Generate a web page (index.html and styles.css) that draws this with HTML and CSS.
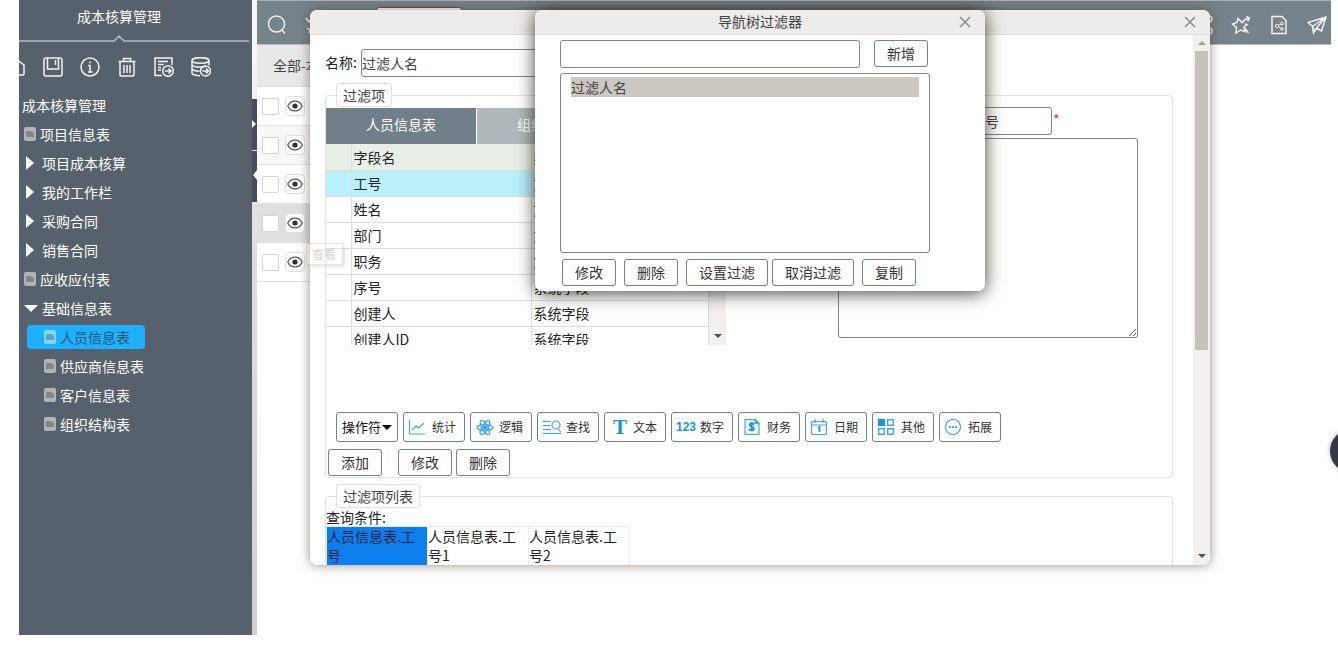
FILE: index.html
```html
<!DOCTYPE html>
<html lang="zh-CN">
<head>
<meta charset="utf-8">
<title>成本核算管理</title>
<link rel="stylesheet" href="styles.css">
</head>
<body>
<svg class="defs" aria-hidden="true">
  <symbol id="doc" viewBox="0 0 12 14"><rect width="12" height="14" rx="2" fill="currentColor"/><path d="M2 4h5l3 2v4H2z" fill="#000" opacity=".25"/></symbol>
  <symbol id="eye" viewBox="0 0 16 12"><path d="M.7 6C4-.6 12-.6 15.300 6 12 12.600 4 12.600.7 6z" fill="#fff" stroke="#555" stroke-width="1.200"/><circle cx="8" cy="6" r="2.600" fill="#333"/></symbol>
  <symbol id="close" viewBox="0 0 12 12"><path d="M1 1l10 10M11 1L1 11" stroke="#8b8b87" stroke-width="1.500" fill="none"/></symbol>
</svg>
<div class="app">
  <nav class="sidebar">
    <h1 class="side-title">成本核算管理</h1>
    <svg class="side-line" viewBox="0 0 230 8"><path d="M0 7h95l5-5 5 5h125" fill="none" stroke="#b5bbbf" stroke-width="1.500"/></svg>
    <div class="side-tools">
      <button class="icon-btn" aria-label="主页"><svg viewBox="0 0 20 20"><path d="M1 9l9-7 8 6v9q0 1-1 1h-4"/></svg></button>
      <button class="icon-btn" aria-label="保存"><svg viewBox="0 0 20 20"><rect x="1" y="1" width="18" height="18" rx="2"/><path d="M4.500 1v11h11V1M12.500 3v5"/></svg></button>
      <button class="icon-btn" aria-label="信息"><svg viewBox="0 0 20 20"><circle cx="10" cy="10" r="9"/><path d="M8 8.500h2V15M8 15h4.500M10 4.500v1.800"/></svg></button>
      <button class="icon-btn" aria-label="清空"><svg viewBox="0 0 20 20"><path d="M1.500 4.500h17M6.500 4V1.500h7V4M3 4.500V18q0 1 1 1h12q1 0 1-1V4.500M7 8v8M10 8v8M13 8v8"/></svg></button>
      <button class="icon-btn" aria-label="导出报表"><svg viewBox="0 0 20 20"><path d="M8 18.500H1V1h17v7M4 4.500h10M4 7.500h6M4 10.500h3M4 13h3"/><circle cx="14" cy="14" r="5.300"/><path d="M11 14h6M14.500 11.500L17 14l-2.500 2.500"/></svg></button>
      <button class="icon-btn" aria-label="导出数据"><svg viewBox="0 0 20 20"><ellipse cx="9.500" cy="3.500" rx="8.500" ry="2.800"/><path d="M1 3.500V16c0 1.500 4 2.700 8 2.700M18 3.500v5M1 7.500c0 2.500 10 3.500 14 1.500M1 11.700c1 2 4 2.500 7.500 2.500"/><circle cx="14.500" cy="14" r="5"/><path d="M11.500 14h6M15 11.500l2.500 2.500-2.500 2.500"/></svg></button>
    </div>
    <ul class="tree">
      <li class="root">成本核算管理</li>
      <li class="leaf"><svg class="doc"><use href="#doc"/></svg>项目信息表</li>
      <li class="folder"><i class="tri"></i>项目成本核算</li>
      <li class="folder"><i class="tri"></i>我的工作栏</li>
      <li class="folder"><i class="tri"></i>采购合同</li>
      <li class="folder"><i class="tri"></i>销售合同</li>
      <li class="leaf"><svg class="doc"><use href="#doc"/></svg>应收应付表</li>
      <li class="folder"><i class="tri open"></i>基础信息表</li>
      <li class="child"><span class="node selected"><svg class="doc"><use href="#doc"/></svg>人员信息表</span></li>
      <li class="child"><span class="node"><svg class="doc"><use href="#doc"/></svg>供应商信息表</span></li>
      <li class="child"><span class="node"><svg class="doc"><use href="#doc"/></svg>客户信息表</span></li>
      <li class="child"><span class="node"><svg class="doc"><use href="#doc"/></svg>组织结构表</span></li>
    </ul>
  </nav>
  <div class="splitter">
    <button class="handle" aria-label="展开"><svg viewBox="0 0 5 50"><path d="M0 20l4 4-4 4z" fill="#fff"/></svg></button>
    <button class="handle" aria-label="收起"><svg viewBox="0 0 5 50"><path d="M5 18l-4 5 4 5z" fill="#fff"/></svg></button>
  </div>
  <main class="main">
    <header class="toolbar">
      <div class="tools">
        <button class="icon-btn" aria-label="搜索"><svg viewBox="0 0 20 20"><circle cx="9.500" cy="9" r="8"/><path d="M15 15l3 3.500"/></svg></button>
        <button class="icon-btn" aria-label="刷新"><svg viewBox="0 0 20 20"><path d="M1 3l3 4 4-3M2 13l3 2-1 3M4 7c4-6 11-5 13 0M5 15c4 5 10 3 12-2"/></svg></button>
      </div>
      <div class="peek"></div>
      <div class="tools right">
        <button class="icon-btn" aria-label="分享"><svg viewBox="0 0 20 20"><circle cx="4" cy="10" r="3"/><circle cx="16" cy="4" r="3"/><circle cx="16" cy="16" r="3"/><path d="M7 9l6-4M7 11l6 4"/></svg></button>
        <button class="icon-btn" aria-label="固定"><svg viewBox="0 0 20 20"><path d="M11.500 8L7 3.500 6 7.500 1.500 9l4 3.500-.5 5.500 4.500-3 4.500 1.500-1-4.500 3-2.500-2-.5M14 13.500l3.500 4.500M11.500 8c1-3 3-4.200 6-4.500M15.500 1.500L18.500 3.300 16.500 6.500"/></svg></button>
        <button class="icon-btn" aria-label="分享文件"><svg viewBox="0 0 20 20"><path d="M3 1.500h10l4 4v13H3z"/><g class="thin"><circle cx="8" cy="11" r="1.700"/><circle cx="13" cy="8.500" r="1.300"/><circle cx="13" cy="14" r="1.300"/><path d="M9.500 10.500l2.500-1.500M9.500 11.500l2.500 2"/></g></svg></button>
        <button class="icon-btn" aria-label="发送"><svg viewBox="0 0 20 20"><path d="M1 7.500L19 2l-4.500 14-5-3-3 5-1-6.500zM5.500 11.500L19 2 9.500 13M6.500 18v-5"/></svg></button>
      </div>
    </header>
    <div class="records">
      <div class="crumb">全部-本表</div>
      <div class="row"><input type="checkbox" aria-label="选择第1行"><button class="view" aria-label="查看"><svg><use href="#eye"/></svg></button></div>
      <div class="row alt"><input type="checkbox" aria-label="选择第2行"><button class="view" aria-label="查看"><svg><use href="#eye"/></svg></button></div>
      <div class="row"><input type="checkbox" aria-label="选择第3行"><button class="view" aria-label="查看"><svg><use href="#eye"/></svg></button></div>
      <div class="row hover"><input type="checkbox" aria-label="选择第4行"><button class="view" aria-label="查看"><svg><use href="#eye"/></svg></button></div>
      <div class="row"><input type="checkbox" aria-label="选择第5行"><button class="view" aria-label="查看"><svg><use href="#eye"/></svg></button></div>
    </div>
  </main>
</div>

<div class="overlay">
  <section class="dialog editor">
    <header class="dialog-head"><button class="close" aria-label="关闭"><svg><use href="#close"/></svg></button></header>
    <div class="dialog-body">
      <div class="content">
        <div class="name-row"><label for="fname">名称:</label><input id="fname" class="field" type="text" value="过滤人名"></div>
        <fieldset class="group">
          <legend>过滤项</legend>
          <div class="columns">
            <div class="fields">
              <div class="tabs"><button class="tab active">人员信息表</button><button class="tab">组织结构表</button></div>
              <div class="pane">
                <table class="grid">
                  <colgroup><col class="c-mark"><col class="c-name"><col></colgroup>
                  <tr class="head"><th></th><th>字段名</th><th>类型</th></tr>
                  <tr class="current"><td></td><td>工号</td><td>文本</td></tr>
                  <tr><td></td><td>姓名</td><td>文本</td></tr>
                  <tr><td></td><td>部门</td><td>文本</td></tr>
                  <tr><td></td><td>职务</td><td>文本</td></tr>
                  <tr><td></td><td>序号</td><td>系统字段</td></tr>
                  <tr><td></td><td>创建人</td><td>系统字段</td></tr>
                  <tr><td></td><td>创建人ID</td><td>系统字段</td></tr>
                </table>
                <div class="scroll"><i class="down"></i></div>
              </div>
            </div>
            <div class="expr">
              <div class="item-row"><label for="item">名称:</label><input id="item" class="field" type="text" value="人员信息表.工号"><span class="must">*</span></div>
              <textarea class="field" aria-label="表达式"></textarea>
            </div>
          </div>
          <div class="ops">
            <button class="op">操作符<i class="caret"></i></button>
            <button class="op"><svg viewBox="0 0 16 16"><path d="M.5 1v14H16M3 11l4-4 3 2 5-5"/></svg>统计</button>
            <button class="op"><svg class="wide" viewBox="0 0 16 16"><ellipse cx="8" cy="8" rx="7.500" ry="2.800"/><ellipse cx="8" cy="8" rx="7.500" ry="2.800" transform="rotate(60 8 8)"/><ellipse cx="8" cy="8" rx="7.500" ry="2.800" transform="rotate(120 8 8)"/><circle cx="8" cy="8" r="1.500" fill="#1296e8"/></svg>逻辑</button>
            <button class="op"><svg class="wide" viewBox="0 0 18 16"><path d="M0 2h8M0 6h7M0 10h8M0 14h18M15.500 9.500L18 13"/><circle cx="13" cy="5.500" r="4"/></svg>查找</button>
            <button class="op"><b class="glyph serif">T</b>文本</button>
            <button class="op"><b class="glyph digits">123</b>数字</button>
            <button class="op"><svg viewBox="0 0 16 16"><path d="M1 .7h10l4 4v10.600H1z"/><path d="M11 .7l4 4h-4z" fill="#1296e8"/><path class="bold" d="M10 5.500C9 4 5.500 4 5.500 6S10 7.500 10 9.700 6 11.500 5 10M7.700 3v9.500"/></svg>财务</button>
            <button class="op"><svg viewBox="0 0 16 16"><rect x=".6" y="2.500" width="14.800" height="13" rx="1"/><path d="M.6 6h14.800M4 0v4M12 0v4"/><path class="bold" d="M7 9l1.500-1v5"/></svg>日期</button>
            <button class="op"><svg viewBox="0 0 16 16"><path d="M0 0h7v7H0z" fill="#1296e8" stroke="none"/><path class="mid" d="M9.700.7h5.600v5.600H9.700zM.7 9.700h5.600v5.600H.7zM9.700 9.700h5.600v5.600H9.700z"/></svg>其他</button>
            <button class="op"><svg viewBox="0 0 16 16"><circle cx="8" cy="8" r="7.500"/><path d="M4 7.200h1.800V9H4zM7.100 7.200h1.800V9H7.100zM10.200 7.200H12V9h-1.800z" fill="#1296e8" stroke="none"/></svg>拓展</button>
          </div>
          <div class="actions"><button class="btn first">添加</button><button class="btn">修改</button><button class="btn">删除</button></div>
        </fieldset>
        <fieldset class="group">
          <legend>过滤项列表</legend>
          <div class="query">查询条件:</div>
          <table class="terms"><tr><td class="on">人员信息表.工号</td><td>人员信息表.工号1</td><td>人员信息表.工号2</td></tr></table>
        </fieldset>
      </div>
      <div class="scroll main-scroll"><i class="up"></i><span class="thumb"></span><i class="down"></i></div>
    </div>
  </section>
</div>

<div class="overlay">
  <section class="dialog picker">
    <header class="dialog-head"><h2>导航树过滤器</h2><button class="close" aria-label="关闭"><svg><use href="#close"/></svg></button></header>
    <div class="picker-body">
      <div class="add-row"><input class="field" type="text" aria-label="过滤器名称"><button class="btn">新增</button></div>
      <select class="field list" size="8" aria-label="过滤器"><option selected>过滤人名</option></select>
      <div class="picker-actions">
        <button class="btn">修改</button><button class="btn">删除</button>
        <div class="pair"><button class="btn">设置过滤</button><button class="btn">取消过滤</button></div>
        <button class="btn">复制</button>
      </div>
    </div>
  </section>
</div>
<div class="tip">查看</div>
<div class="bubble"></div>
</body>
</html>
```
FILE: styles.css
```css
* { box-sizing: border-box; }
body, h1, h2, ul, fieldset, legend { margin: 0; padding: 0; }
body {
  position: relative;
  min-height: 100vh;
  overflow: hidden;
  background: #fff;
  color: #222;
  font: 14px/20px "Noto Sans CJK SC", sans-serif;
}
button, input, select, textarea { font: inherit; color: inherit; margin: 0; }
button { padding: 0; border: 0; background: none; }
h1, h2 { font-size: 14px; font-weight: 400; }
ul { list-style: none; }
.defs { display: none; }

.app { display: flex; padding: 0 7px 0 19px; }
.icon-btn { flex: none; width: 20px; height: 20px; }
.icon-btn svg { display: block; width: 20px; height: 20px; fill: none; stroke: #f2f3f3; stroke-width: 1.5; }
.icon-btn .thin { stroke-width: 1; }

.sidebar {
  flex: none;
  width: 233px;
  min-height: calc(100vh - 26px);
  background: #56616b;
  color: #fff;
  overflow: hidden;
}
.side-title { width: 200px; padding-top: 6px; text-align: center; }
.side-line { display: block; width: 230px; height: 8px; margin-top: 8px; }
.side-tools { display: flex; gap: 17px; margin: 15px 0 0 -13px; }
.tree { margin-top: 14px; }
.tree li { display: flex; align-items: center; height: 29px; padding-bottom: 1px; }
.tree .root { padding-left: 3px; }
.tree .leaf, .tree .folder { padding-left: 5px; }
.tree .child { padding-left: 8px; }
.node { display: flex; align-items: center; height: 24px; padding: 0 15px 1px 17px; border-radius: 4px; }
.selected { background: #1cb0ff; color: #27546f; }
.doc { width: 12px; height: 14px; margin-right: 4px; color: #b1b4b6; }
.selected .doc { color: #84d5ff; }
.tri { width: 8px; margin: 0 8px 0 2px; border: solid transparent; border-width: 7px 0 7px 8px; border-left-color: #fff; }
.tri.open { width: 14px; margin: 0 4px 0 0; border-width: 7px 7px 0; border-color: #fff transparent transparent; }

.splitter { flex: none; width: 5px; padding-top: 99px; background: linear-gradient(#f5f5f5 60px, #dededc 240px, #cfcfcd); display: flex; flex-direction: column; gap: 1px; }
.handle { width: 5px; height: 51px; background: #454b5a; }
.handle svg { display: block; width: 5px; height: 50px; }

.main { flex: 1; min-width: 0; }
.toolbar {
  position: relative;
  display: flex;
  justify-content: space-between;
  align-items: center;
  height: 45px;
  padding: 4px 4px 0 10px;
  background: #76838a;
  border-top: 1px solid #a9aeb0;
  border-bottom: 1px solid #b7bdc0;
}
.tools { display: flex; gap: 18px; }
.peek { position: absolute; left: 119px; top: 6px; width: 86px; height: 20px; background: #fff; border: 1px solid #555; border-radius: 3px; }
.records { width: 75%; }
.crumb { height: 42px; padding: 10px 16px; background: #e8e8e8; border-bottom: 1px solid #ddd; color: #444; }
.row { display: flex; align-items: center; gap: 6px; height: 39px; padding-left: 5px; border-bottom: 1px solid #e3e3e3; }
.row.alt { background: #f7f7f7; }
.row.hover { background: #dedfdf; }
.row input { appearance: none; width: 17px; height: 17px; background: #fff; border: 1px solid #d9d3d0; border-radius: 2px; }
.view { display: grid; place-items: center; width: 20px; height: 20px; background: #fff; border: 1px solid #e2e0de; border-radius: 4px; }
.view svg { width: 16px; height: 12px; }

.overlay { position: absolute; inset: 10px 0 auto 182px; display: flex; justify-content: center; }
.dialog { background: #fff; border-radius: 7px; overflow: hidden; }
.editor { width: 900px; height: calc(100vh - 106px); display: flex; flex-direction: column; box-shadow: 0 0 12px rgba(60, 50, 35, .55); }
.picker { width: 450px; box-shadow: 0 2px 18px rgba(20, 15, 5, .8); }
.dialog-head { display: flex; align-items: center; justify-content: center; flex: none; position: relative; height: 25px; padding-bottom: 3px; background: #eeecea; border-bottom: 1px solid #dfdedc; }
.dialog-head h2 { color: #444; }
.close { position: absolute; right: 14px; top: 6px; width: 12px; height: 12px; }
.close svg { display: block; width: 12px; height: 12px; }
.dialog-body { flex: 1; min-height: 0; display: flex; }
.content { flex: 1; min-width: 0; padding: 14px 20px 0 15px; overflow: hidden; }

.field { background: #fff; border: 1px solid #85857f; border-radius: 3px; outline: none; color: #444; padding: 0; }
.btn { height: 27px; padding: 0 12px 1px; background: #fff; border: 1px solid #737f89; border-radius: 3px; color: #333; white-space: nowrap; }

.name-row { display: flex; align-items: center; height: 28px; margin-bottom: 6px; color: #222; }
.name-row .field { width: 300px; height: 28px; }
.name-row label { width: 36px; padding-bottom: 2px; white-space: nowrap; }
.group { min-width: 0; border: 1px solid #e2e2e0; border-radius: 4px; margin-bottom: 6px; }
.group legend { height: 24px; margin-left: 10px; padding: 0 6px; line-height: 22px; background: #fff; border: 1px solid #e0e0de; border-radius: 3px; color: #444; }
.columns { display: flex; justify-content: space-between; padding-right: 34px; }
.fields { width: 400px; padding-top: 1px; }
.tabs { display: flex; gap: 1px; }
.tab { width: 150px; height: 36px; padding-bottom: 5px; background: #b0b8bb; color: #fff; }
.tab.active { background: #717f88; }
.pane { display: flex; height: 201px; overflow: hidden; }
.grid { flex: 1; height: 208px; table-layout: fixed; border-collapse: collapse; }
.c-mark { width: 25px; }
.c-name { width: 180px; }
.grid tr { height: 26px; }
.grid th, .grid td { height: 26px; padding: 0 2px; border: solid #dcdcda; border-width: 0 1px 1px 0; font-weight: 400; text-align: left; }
.head { background: #e7efe6; }
.current { background: #b9f0fa; }
.scroll { flex: none; display: flex; flex-direction: column; align-items: center; width: 17px; background: #f1f0ef; }
.down, .up { width: 8px; border: solid transparent; }
.down { border-width: 4px 4px 0; border-top-color: #505050; margin: auto 0 7px; }
.up { border-width: 0 4px 4px; border-bottom-color: #a3a19d; margin: 6px 0; }
.thumb { width: 13px; height: 56.5%; background: #c5c2bb; }

.expr { width: 300px; }
.item-row { display: flex; height: 28px; }
.item-row label { width: 58px; padding-top: 4px; }
.item-row .field { width: 156px; height: 28px; }
.must { color: #f22; padding-left: 1px; line-height: 24px; }
.expr textarea { display: block; width: 300px; height: 200px; margin-top: 3px; }

.ops { display: flex; flex-wrap: wrap; gap: 5px; margin-top: 67px; padding-left: 10px; }
.op { display: flex; align-items: center; justify-content: space-between; width: 62px; height: 30px; padding: 0 8px 0 5px; background: #fff; border: 1px solid #737f89; border-radius: 3px; font-size: 12px; color: #333; white-space: nowrap; }
.op:first-child { padding-right: 5px; font-size: 13px; color: #111; }
.op svg { width: 16px; height: 16px; fill: none; stroke: #3aa9ef; stroke-width: 1.2; }
.op svg.wide { width: 18px; height: 17px; }
.op .bold { stroke: #1296e8; stroke-width: 1.8; }
.op .mid { stroke-width: 1.4; }
.caret { border: solid transparent; border-width: 5px 5px 0; border-top-color: #000; }
.glyph { color: #1296e8; }
.serif { padding-left: 3px; font: 700 21px/20px "Liberation Serif", serif; }
.digits { font: 700 12px/20px "Liberation Sans", sans-serif; }
.op:has(.digits) { padding-left: 4px; }
.actions { display: flex; gap: 4px; margin-top: 7px; padding: 0 2px 1px; }
.actions .first { margin-right: 12px; }
.query { line-height: 18px; }
.terms { width: 304px; table-layout: fixed; border-collapse: collapse; line-height: 19px; }
.terms td { padding: 0; border: 1px solid #e3eef8; word-break: break-all; vertical-align: top; }
.terms .on { background: #0d7fec; color: #0d2540; }

.picker-body { display: flex; flex-direction: column; padding: 5px 55px 5px 25px; }
.add-row { display: flex; gap: 14px; }
.add-row .field { width: 300px; height: 28px; }
.list { height: 180px; margin-top: 5px; padding: 3px 10px; overflow: hidden; }
.list option { height: 20px; min-height: 20px; padding: 0; line-height: 20px; color: #444; }
.list option:checked { background: #cdc8c1 linear-gradient(#cdc8c1, #cdc8c1); color: #444; }
.picker-actions { display: flex; gap: 8px; margin-top: 6px; padding-left: 2px; }
.pair { display: flex; gap: 4px; }

.tip { position: absolute; left: 306px; top: 243px; padding: 0 6px 0 5px; border: 1px solid #888; background: #fff; box-shadow: 2px 2px 3px #888; font-size: 12px; opacity: .2; }
.bubble { position: absolute; right: -36px; top: 429px; width: 44px; height: 44px; border-radius: 50%; background: #343843; box-shadow: 0 0 5px rgba(0, 0, 0, .3); }
```
